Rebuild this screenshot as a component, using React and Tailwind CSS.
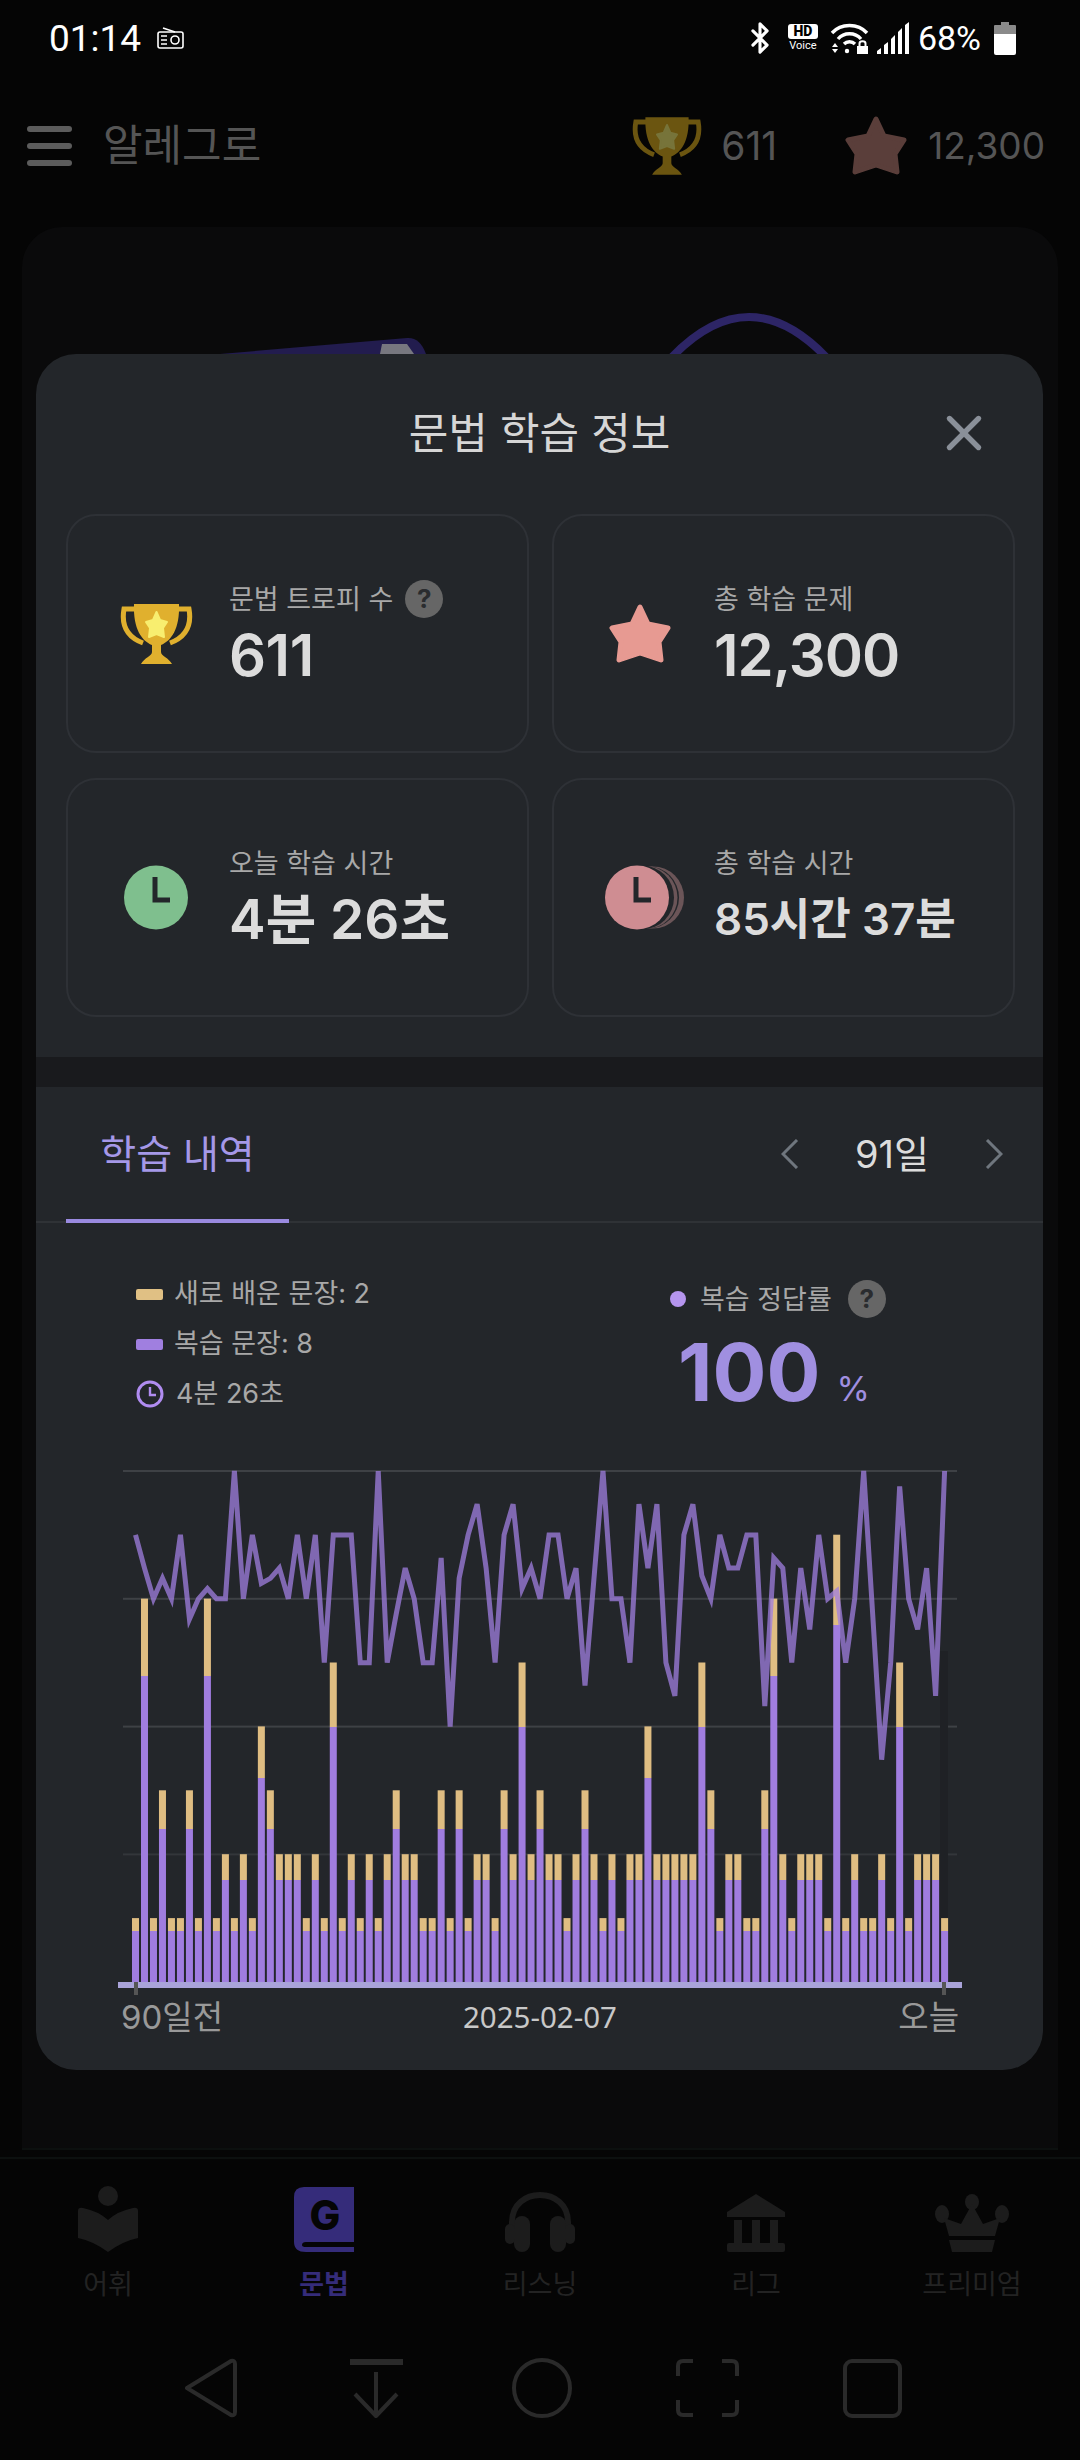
import { Bluetooth, X } from 'lucide-react';

/* ── chart data, 91 days ── */
const totals = [
  1, 6, 1, 3, 1, 1, 3, 1, 6, 1, 2, 1, 2, 1, 4, 3, 2, 2, 2, 1, 2, 1, 5, 1, 2, 1, 2, 1, 2, 3,
  2, 2, 1, 1, 3, 1, 3, 1, 2, 2, 1, 3, 2, 5, 2, 3, 2, 2, 1, 2, 3, 2, 1, 2, 1, 2, 2, 4, 2, 2,
  2, 2, 2, 5, 3, 1, 2, 2, 1, 1, 3, 6, 2, 1, 2, 2, 2, 1, 7, 1, 2, 1, 1, 2, 1, 5, 1, 2, 2, 2, 1,
];

const rates = [
  87.5, 81, 75, 79, 75, 87.5, 71, 75, 77, 75, 75, 100, 75, 87.5, 78, 79, 81, 75, 87.5, 75,
  87.5, 62.5, 87.5, 87.5, 87.5, 62.5, 62.5, 100, 62.5, 72, 81, 75, 62.5, 62.5, 83, 50, 79,
  87.5, 93.5, 81, 62.5, 87.5, 93.5, 77, 81, 75, 87.5, 87.5, 75, 81, 58, 79, 100, 75, 75, 62.5,
  93.5, 81, 93.5, 62.5, 56, 87.5, 93.5, 79.5, 75, 87.5, 81, 81, 87.5, 87.5, 54, 83, 81, 62.5,
  81, 69, 87.5, 75, 76.5, 62.5, 75, 100, 72, 43.5, 62.5, 97, 75, 69, 81, 56, 100,
];

const CHART_TOP = 10;
const CHART_BOTTOM = 521;
const barX = (i) => 96 + i * 8.99;
const rateY = (r) => CHART_BOTTOM - ((CHART_BOTTOM - CHART_TOP) * r) / 100;

const Chart = () => (
  <svg width="1007" height="538" viewBox="0 0 1007 538" className="block" aria-hidden="true">
    {[0, 1, 2, 3].map((n) => (
      <rect key={n} x="87" y={CHART_TOP - 1 + n * 127.8} width="834" height="2" fill={n === 3 ? '#33363a' : '#3e4145'} />
    ))}
    <rect x="904" y="190" width="8" height="330" fill="#1f2125" />
    {totals.map((n, i) => (
      <g key={i}>
        <rect x={barX(i)} y={CHART_BOTTOM - n * 63.9} width="7" height={n * 12.9} fill="#dfbd82" />
        <rect x={barX(i)} y={CHART_BOTTOM - n * 51} width="7" height={n * 51} fill="#a07ddf" />
      </g>
    ))}
    <polyline
      points={rates.map((r, i) => `${barX(i) + 3.5},${rateY(r)}`).join(' ')}
      fill="none"
      stroke="#a07fe0"
      strokeOpacity="0.75"
      strokeWidth="5"
    />
    <rect x="82" y="521" width="844" height="6" fill="#a9a3d9" />
    <rect x="98" y="521" width="4" height="13" fill="#555555" />
    <rect x="906" y="521" width="4" height="13" fill="#555555" />
  </svg>
);

/* ── stat icons ── */
const StarShape = ({ className, fill }) => (
  <svg viewBox="0 0 64 60" className={className} aria-hidden="true">
    <path
      d="M32 3L40 20L60 24L51 38L53 56L32 49L11 56L13 38L4 24L24 20Z"
      fill={fill}
      stroke={fill}
      strokeWidth="5"
      strokeLinejoin="round"
    />
  </svg>
);

const Trophy = ({ className, cup, star }) => (
  <svg viewBox="0 0 75 60" className={className} aria-hidden="true">
    <path d="M17 5H5C2 22 8 33 24 39" fill="none" stroke={cup} strokeWidth="5" />
    <path d="M58 5H70C73 22 67 33 51 39" fill="none" stroke={cup} strokeWidth="5" />
    <path
      d="M15 0H60C61 25 52 37 42 41V48C42 52 50 54 53 60H22C25 54 33 52 33 48V41C23 37 14 25 15 0Z"
      fill={cup}
    />
    <path
      d="M37.5 8L41 16L48 18L44 24L45 33L37.5 30L30 33L31 24L27 18L34 16Z"
      fill={star}
      stroke={star}
      strokeWidth="2"
      strokeLinejoin="round"
    />
  </svg>
);

const ClockIcon = () => (
  <svg viewBox="0 0 64 65" className="w-[64px] h-[65px]" aria-hidden="true">
    <circle cx="32" cy="32.5" r="32" fill="#7fbf8e" />
    <path d="M31 12V35H46" fill="none" stroke="#23262a" strokeWidth="5" />
  </svg>
);

const ClockStackIcon = () => (
  <svg viewBox="0 0 81 65" className="w-[81px] h-[65px]" aria-hidden="true">
    <circle cx="48" cy="32.5" r="31" fill="#6b5558" />
    <circle cx="43" cy="32.5" r="31" fill="#23262a" />
    <circle cx="41" cy="32.5" r="31.5" fill="#6b5558" />
    <circle cx="37" cy="32.5" r="32" fill="#23262a" />
    <circle cx="32" cy="32.5" r="32" fill="#cf8d92" />
    <path d="M31 12V35H46" fill="none" stroke="#23262a" strokeWidth="5" />
  </svg>
);

const Chevron = ({ flip }) => (
  <svg viewBox="0 0 18 30" className="w-[18px] h-[30px]" fill="none" stroke="#6f767e" strokeWidth="3" aria-hidden="true">
    <path d={flip ? 'M2 1L16 15L2 29' : 'M16 1L2 15L16 29'} />
  </svg>
);

const HelpBadge = () => (
  <span className="flex items-center justify-center w-[38px] h-[38px] rounded-full bg-[#666666] text-[#2a2c2f] text-[26px] font-bold leading-none">
    ?
  </span>
);

const StatCard = ({ iconBox, icon, label, help, value, valueClass }) => (
  <div className="flex items-center h-[239px] rounded-[30px] border-2 border-[#2e3136]">
    <div className={`flex justify-center shrink-0 ${iconBox}`}>{icon}</div>
    <div className="flex flex-col pb-[3px]">
      <div className="flex items-center gap-[12px] h-[38px] text-[27px] leading-none text-[#a8a8a8]">
        {label}
        {help && <HelpBadge />}
      </div>
      <div className={`flex items-center h-[58px] font-semibold text-[#dcdcdc] leading-none mt-[8px] ${valueClass}`}>{value}</div>
    </div>
  </div>
);

/* ── dimmed page behind the sheet ── */
const StatusBar = () => (
  <div className="flex items-center justify-between h-[76px] pl-[49px] pr-[64px] font-[Roboto,sans-serif] text-white">
    <div className="flex items-center gap-[16px]">
      <span className="text-[37px] leading-none">01:14</span>
      <svg viewBox="0 0 27 22" className="w-[27px] h-[22px]" fill="none" stroke="#ffffff" strokeWidth="1.6" aria-hidden="true">
        <rect x="1" y="5" width="25" height="16" rx="2" />
        <path d="M6 1L18 5M4 9H10M4 13H10M4 17H10" />
        <circle cx="18" cy="13" r="4" />
      </svg>
    </div>
    <div className="flex items-center">
      <Bluetooth size={34} strokeWidth={2.2} className="text-white" />
      <div className="flex flex-col items-center ml-[11px] w-[30px]">
        <span className="w-[30px] h-[15px] rounded-[3px] bg-white text-black text-[14px] font-black leading-[15px] text-center">HD</span>
        <span className="text-[11px] leading-[12px] mt-[1px]">Voice</span>
      </div>
      <svg viewBox="0 0 39 32" className="w-[39px] h-[32px] ml-[12px]" fill="none" stroke="#ffffff" strokeWidth="3.4" aria-hidden="true">
        <path d="M2 11C11 1 28 1 37 11" />
        <path d="M8 17C14 10 25 10 31 17" />
        <path d="M14 22C17 19 22 19 25 22" />
        <path d="M2 25L5 21L8 25ZM2 27L5 31L8 27Z" fill="#ffffff" stroke="none" />
        <circle cx="17" cy="29" r="2.2" fill="#ffffff" stroke="none" />
        <rect x="27" y="24" width="11" height="8" fill="#ffffff" stroke="none" />
        <path d="M29.5 24V21.5C29.5 18.5 35.5 18.5 35.5 21.5V24" strokeWidth="2" />
      </svg>
      <svg viewBox="0 0 32 32" className="w-[32px] h-[32px] ml-[8px]" fill="#ffffff" aria-hidden="true">
        <path d="M0 32V29L4 26V32ZM7 32V23L11 20V32ZM14 32V17L18 13V32ZM21 32V10L25 6V32ZM28 32V3L32 0V32Z" />
      </svg>
      <span className="text-[34px] leading-none ml-[9px]">68%</span>
      <svg viewBox="0 0 22 33" className="w-[22px] h-[33px] ml-[13px]" aria-hidden="true">
        <path d="M7 0H15V3H21Q22 3 22 4V12H0V4Q0 3 1 3H7Z" fill="#8a8a8a" />
        <path d="M0 12H22V31Q22 33 20 33H2Q0 33 0 31Z" fill="#ffffff" />
      </svg>
    </div>
  </div>
);

const AppHeader = () => (
  <div className="flex items-center h-[151px] pl-[27px] pr-[35px] pb-[12px] text-[#555555]">
    <div className="flex flex-col gap-[11px] w-[45px]">
      <span className="h-[6px] rounded-full bg-[#5c5c5c]" />
      <span className="h-[6px] rounded-full bg-[#5c5c5c]" />
      <span className="h-[6px] rounded-full bg-[#5c5c5c]" />
    </div>
    <span className="ml-[31px] text-[43px] leading-none">알레그로</span>
    <div className="ml-auto flex items-center">
      <Trophy className="w-[72px] h-[58px]" cup="#6b5510" star="#77743a" />
      <span className="ml-[18px] text-[39px] leading-none">611</span>
      <StarShape className="w-[64px] h-[60px] ml-[67px]" fill="#5a3e3a" />
      <span className="ml-[20px] text-[37px] leading-none">12,300</span>
    </div>
  </div>
);

const TabItem = ({ icon, label, active }) => (
  <div className="flex flex-col items-center w-[216px]">
    <div className="flex items-end justify-center h-[66px]">{icon}</div>
    <span className={`mt-[18px] text-[27px] leading-[30px] ${active ? 'font-bold text-[#352c7a]' : 'text-[#232323]'}`}>{label}</span>
  </div>
);

const TabBar = () => (
  <div className="flex justify-between h-[173px] pt-[27px] border-t-2 border-[#0c100f]">
    <TabItem
      label="어휘"
      icon={
        <svg viewBox="0 0 60 66" className="w-[60px] h-[66px]" fill="#1c1c1c" aria-hidden="true">
          <circle cx="30" cy="10" r="10" />
          <path d="M0 25Q0 21 5 22Q20 25 30 34Q40 25 55 22Q60 21 60 25V52Q45 55 30 66Q15 55 0 52Z" />
        </svg>
      }
    />
    <TabItem
      active
      label="문법"
      icon={
        <svg viewBox="0 0 60 65" className="w-[60px] h-[65px]" aria-hidden="true">
          <path d="M10 0H60V55H12Q8 55 8 58Q8 60 12 60H60V65H12Q0 65 0 55V10Q0 0 10 0Z" fill="#352c7a" />
          <text x="31" y="43" textAnchor="middle" fontFamily="Inter, sans-serif" fontWeight="800" fontSize="41" fill="#050505">G</text>
        </svg>
      }
    />
    <TabItem
      label="리스닝"
      icon={
        <svg viewBox="0 0 70 60" className="w-[70px] h-[60px]" fill="#1c1c1c" aria-hidden="true">
          <path d="M7 36V30C7 -6 63 -6 63 30V36" fill="none" stroke="#1c1c1c" strokeWidth="6" />
          <rect x="9" y="24" width="16" height="36" rx="8" />
          <rect x="45" y="24" width="16" height="36" rx="8" />
          <rect x="0" y="32" width="10" height="20" rx="5" />
          <rect x="60" y="32" width="10" height="20" rx="5" />
        </svg>
      }
    />
    <TabItem
      label="리그"
      icon={
        <svg viewBox="0 0 58 58" className="w-[58px] h-[58px]" fill="#1c1c1c" aria-hidden="true">
          <path d="M29 0L58 18V23H0V18Z" />
          <rect x="7" y="26" width="8" height="24" />
          <rect x="25" y="26" width="8" height="24" />
          <rect x="43" y="26" width="8" height="24" />
          <rect x="0" y="49" width="58" height="9" rx="2" />
        </svg>
      }
    />
    <TabItem
      label="프리미엄"
      icon={
        <svg viewBox="0 0 74 58" className="w-[74px] h-[58px]" fill="#1c1c1c" aria-hidden="true">
          <ellipse cx="37" cy="8" rx="7" ry="8" />
          <ellipse cx="7" cy="20" rx="7" ry="9" />
          <ellipse cx="67" cy="20" rx="7" ry="9" />
          <path d="M37 10L48 30L65 24L60 42H14L9 24L26 30Z" />
          <path d="M14 46H60L57 58H17Z" />
        </svg>
      }
    />
  </div>
);

const NavBar = () => (
  <div className="flex justify-center items-start h-[130px] pt-[28px] pl-[20px]">
    <svg viewBox="0 0 730 60" className="w-[730px] h-[60px]" fill="none" stroke="#2a2a2a" strokeWidth="4" strokeLinejoin="round" aria-hidden="true">
      <path d="M2 30L46 3Q50 2 50 6V54Q50 58 46 57Z" />
      <path d="M165 4H218" strokeWidth="6" />
      <path d="M191 14V58M170 36L191 58L212 36" />
      <circle cx="357" cy="30" r="28" />
      <path d="M493 18V8Q493 3 498 3H508M537 3H547Q552 3 552 8V18M552 42V52Q552 57 547 57H537M508 57H498Q493 57 493 52V42" />
      <rect x="660" y="3" width="55" height="55" rx="7" />
    </svg>
  </div>
);

const BackgroundPage = () => (
  <div className="flex flex-col h-full">
    <StatusBar />
    <AppHeader />
    <div className="relative flex-1 mx-[22px] rounded-t-[40px] border-b-2 border-[#0c100f] bg-[#0a0a0b] overflow-hidden">
      <svg viewBox="0 0 1036 130" className="absolute left-0 top-0 w-[1036px] h-[130px]" fill="none" aria-hidden="true">
        <path d="M198 127L385 111Q398 110 404 127Z" fill="#221c4e" />
        <path d="M358 127L360 117H385L392 127Z" fill="#77777f" />
        <path d="M650 130Q727 50 804 130" stroke="#2d2566" strokeWidth="8" />
      </svg>
    </div>
    <div className="h-[7px]" />
    <TabBar />
    <NavBar />
  </div>
);

/* ── study info sheet ── */
const StudyInfoSheet = () => (
  <div className="absolute left-[36px] top-[354px] w-[1007px] h-[1716px] rounded-[40px] bg-[#23262a] overflow-hidden">
    <div className="relative flex items-center justify-center h-[160px] pb-[2px]">
      <span className="text-[43px] leading-none text-[#d6d6d6]">문법 학습 정보</span>
      <X size={58} strokeWidth={2.2} className="absolute right-[50px] top-[50px] text-[#8a9099]" />
    </div>

    <div className="grid grid-cols-[463px_463px] gap-x-[23px] gap-y-[25px] px-[30px]">
      <StatCard
        iconBox="w-[161px] pl-[15px]"
        icon={<Trophy className="w-[75px] h-[60px]" cup="#e0b02e" star="#f8ee6f" />}
        label="문법 트로피 수"
        help
        value="611"
        valueClass="text-[58px] tracking-[-0.5px]"
      />
      <StatCard
        iconBox="w-[160px] pl-[12px]"
        icon={<StarShape className="w-[64px] h-[60px]" fill="#e79a92" />}
        label="총 학습 문제"
        value="12,300"
        valueClass="text-[58px] tracking-[-1px]"
      />
      <StatCard
        iconBox="w-[161px] pl-[15px]"
        icon={<ClockIcon />}
        label="오늘 학습 시간"
        value="4분 26초"
        valueClass="text-[55px]"
      />
      <StatCard
        iconBox="w-[160px] pl-[22px]"
        icon={<ClockStackIcon />}
        label="총 학습 시간"
        value="85시간 37분"
        valueClass="text-[44px]"
      />
    </div>

    <div className="h-[30px] mt-[40px] bg-[#191a1d]" />

    <div className="flex items-stretch h-[136px] pl-[30px] border-b-2 border-[#2f3236]">
      <div className="flex items-center justify-center w-[223px] h-[136px] border-b-4 border-[#9a8ae0] text-[39px] leading-none text-[#a598e8]">
        학습 내역
      </div>
      <div className="ml-auto flex items-center pr-[40px] h-[134px]">
        <Chevron />
        <span className="w-[186px] text-center text-[38px] leading-none text-[#dcdcdc]">91일</span>
        <Chevron flip />
      </div>
    </div>

    <div className="flex h-[238px] pt-[56px]">
      <div className="flex flex-col gap-[20px] w-[634px] pl-[100px] text-[27px] leading-[30px] text-[#a8a8a8]">
        <div className="flex items-center gap-[11px]">
          <span className="w-[27px] h-[11px] rounded-[2px] bg-[#e0c084]" />
          새로 배운 문장: 2
        </div>
        <div className="flex items-center gap-[11px]">
          <span className="w-[27px] h-[11px] rounded-[2px] bg-[#a07fe0]" />
          복습 문장: 8
        </div>
        <div className="flex items-center gap-[12px]">
          <svg viewBox="0 0 28 28" className="w-[28px] h-[28px]" fill="none" stroke="#b08cf0" strokeWidth="3" aria-hidden="true">
            <circle cx="14" cy="14" r="12" />
            <path d="M14 7V15H20" strokeWidth="2.4" />
          </svg>
          4분 26초
        </div>
      </div>
      <div className="flex flex-col">
        <div className="flex items-center h-[40px] text-[27px] leading-none text-[#a8a8a8]">
          <span className="w-[16px] h-[16px] rounded-full bg-[#b595ee] mr-[14px]" />
          복습 정답률
          <span className="ml-[16px]">
            <HelpBadge />
          </span>
        </div>
        <div className="flex items-baseline mt-[13px] ml-[8px] text-[#a08fe0] leading-none">
          <span className="text-[80px] font-bold">100</span>
          <span className="ml-[16px] text-[34px]">%</span>
        </div>
      </div>
    </div>

    <Chart />

    <div className="grid grid-cols-3 items-center pl-[85px] pr-[84px] -mt-[2px]">
      <span className="text-[33px] leading-[40px] text-[#999999]">90일전</span>
      <span className="text-center text-[29.5px] leading-[40px] text-[#c8c8c8] font-['Noto_Sans',sans-serif]">2025-02-07</span>
      <span className="text-right text-[33px] leading-[40px] text-[#999999]">오늘</span>
    </div>
  </div>
);

export default function App() {
  return (
    <div className="relative w-[1080px] h-[2460px] overflow-hidden bg-[#050505] font-[Inter,'Noto_Sans_CJK_KR',sans-serif]">
      <BackgroundPage />
      <StudyInfoSheet />
    </div>
  );
}
